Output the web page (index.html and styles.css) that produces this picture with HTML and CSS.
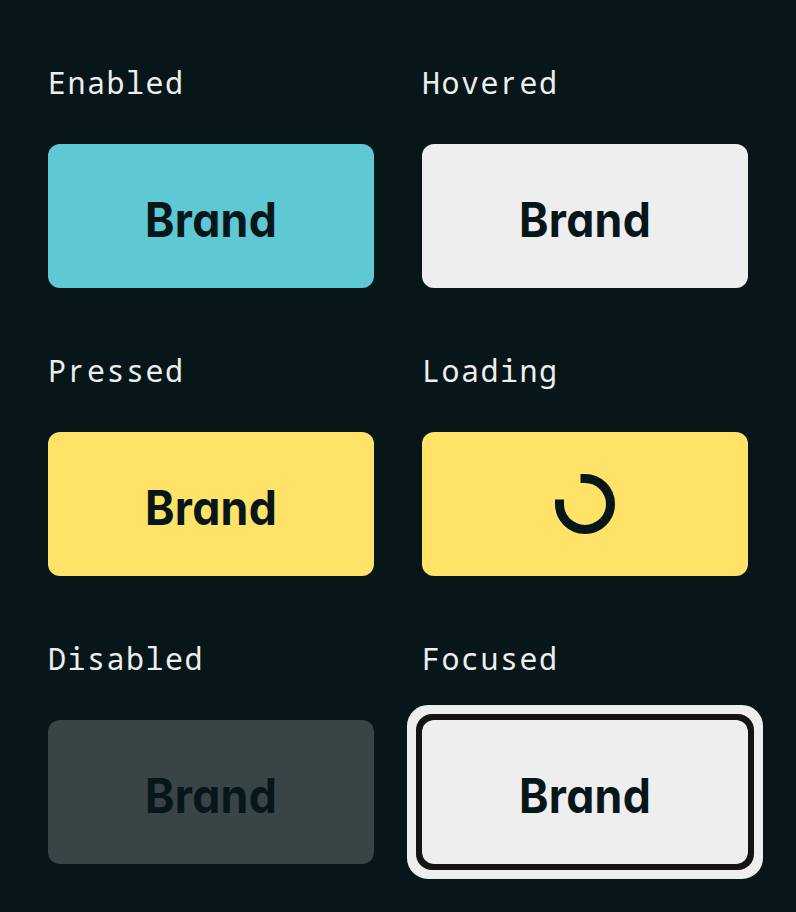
FILE: index.html
```html
<!DOCTYPE html>
<html lang="en">
<head>
<meta charset="utf-8">
<title>Button states</title>
<link rel="stylesheet" href="styles.css">
</head>
<body>
<main class="states">
  <section class="state"><h2 class="label">Enabled</h2><button class="button"><span class="text">Brand</span></button></section>
  <section class="state"><h2 class="label">Hove<span class="plain">r</span>ed</h2><button class="button hovered"><span class="text">Brand</span></button></section>
  <section class="state"><h2 class="label">P<span class="plain">r</span>essed</h2><button class="button pressed"><span class="text">Brand</span></button></section>
  <section class="state"><h2 class="label">Loading</h2><button class="button pressed" aria-label="Loading"><svg class="spinner" viewBox="0 0 60 60"><path d="M25.5 4.5H30A25.5 25.5 0 1 1 4.5 30V25.5" fill="none" stroke="currentColor" stroke-width="9"/></svg></button></section>
  <section class="state"><h2 class="label">Disabled</h2><button class="button disabled" disabled><span class="text">Brand</span></button></section>
  <section class="state"><h2 class="label">Focused</h2><button class="button hovered focused"><span class="text">Brand</span></button></section>
</main>
</body>
</html>
```
FILE: styles.css
```css
* { box-sizing: border-box; }
body { margin: 0; background: #061619; }
.states {
  display: grid;
  grid-template-columns: 326px 326px;
  column-gap: 48px;
  row-gap: 48px;
  padding: 48px;
}
.state { display: flex; flex-direction: column; gap: 26px; }
.label {
  margin: 0;
  height: 70px;
  line-height: 70px;
  font-family: "Noto Sans Mono", "DejaVu Sans Mono", monospace;
  font-size: 30px;
  font-weight: 400;
  letter-spacing: 1.5px;
  color: #eee;
}
.plain {
  display: inline-block;
  width: 19.5px;
  padding-left: 2px;
  line-height: 1;
  letter-spacing: 0;
  font-family: "Noto Sans", sans-serif;
}
.button {
  position: relative;
  display: flex;
  align-items: center;
  justify-content: center;
  height: 144px;
  padding: 8px 0 0;
  border: 0;
  border-radius: 12px;
  background: #5ec8d5;
  color: #061619;
}
.text {
  font-family: Inter, sans-serif;
  font-feature-settings: "cv11";
  font-size: 48px;
  font-weight: 700;
  letter-spacing: 0.3px;
  line-height: 72px;
  transform: scaleX(0.93);
}
.hovered { background: #eee; }
.pressed { background: #ffe268; }
.disabled { background: #384446; }
.focused::before,
.focused::after {
  content: "";
  position: absolute;
}
.focused::before {
  inset: -15px;
  border: 12px solid #eee;
  border-radius: 21px;
}
.focused::after {
  inset: -6px;
  border: 6px solid #141414;
  border-radius: 16px;
}
.spinner { width: 60px; height: 60px; margin-top: -8px; }
```
